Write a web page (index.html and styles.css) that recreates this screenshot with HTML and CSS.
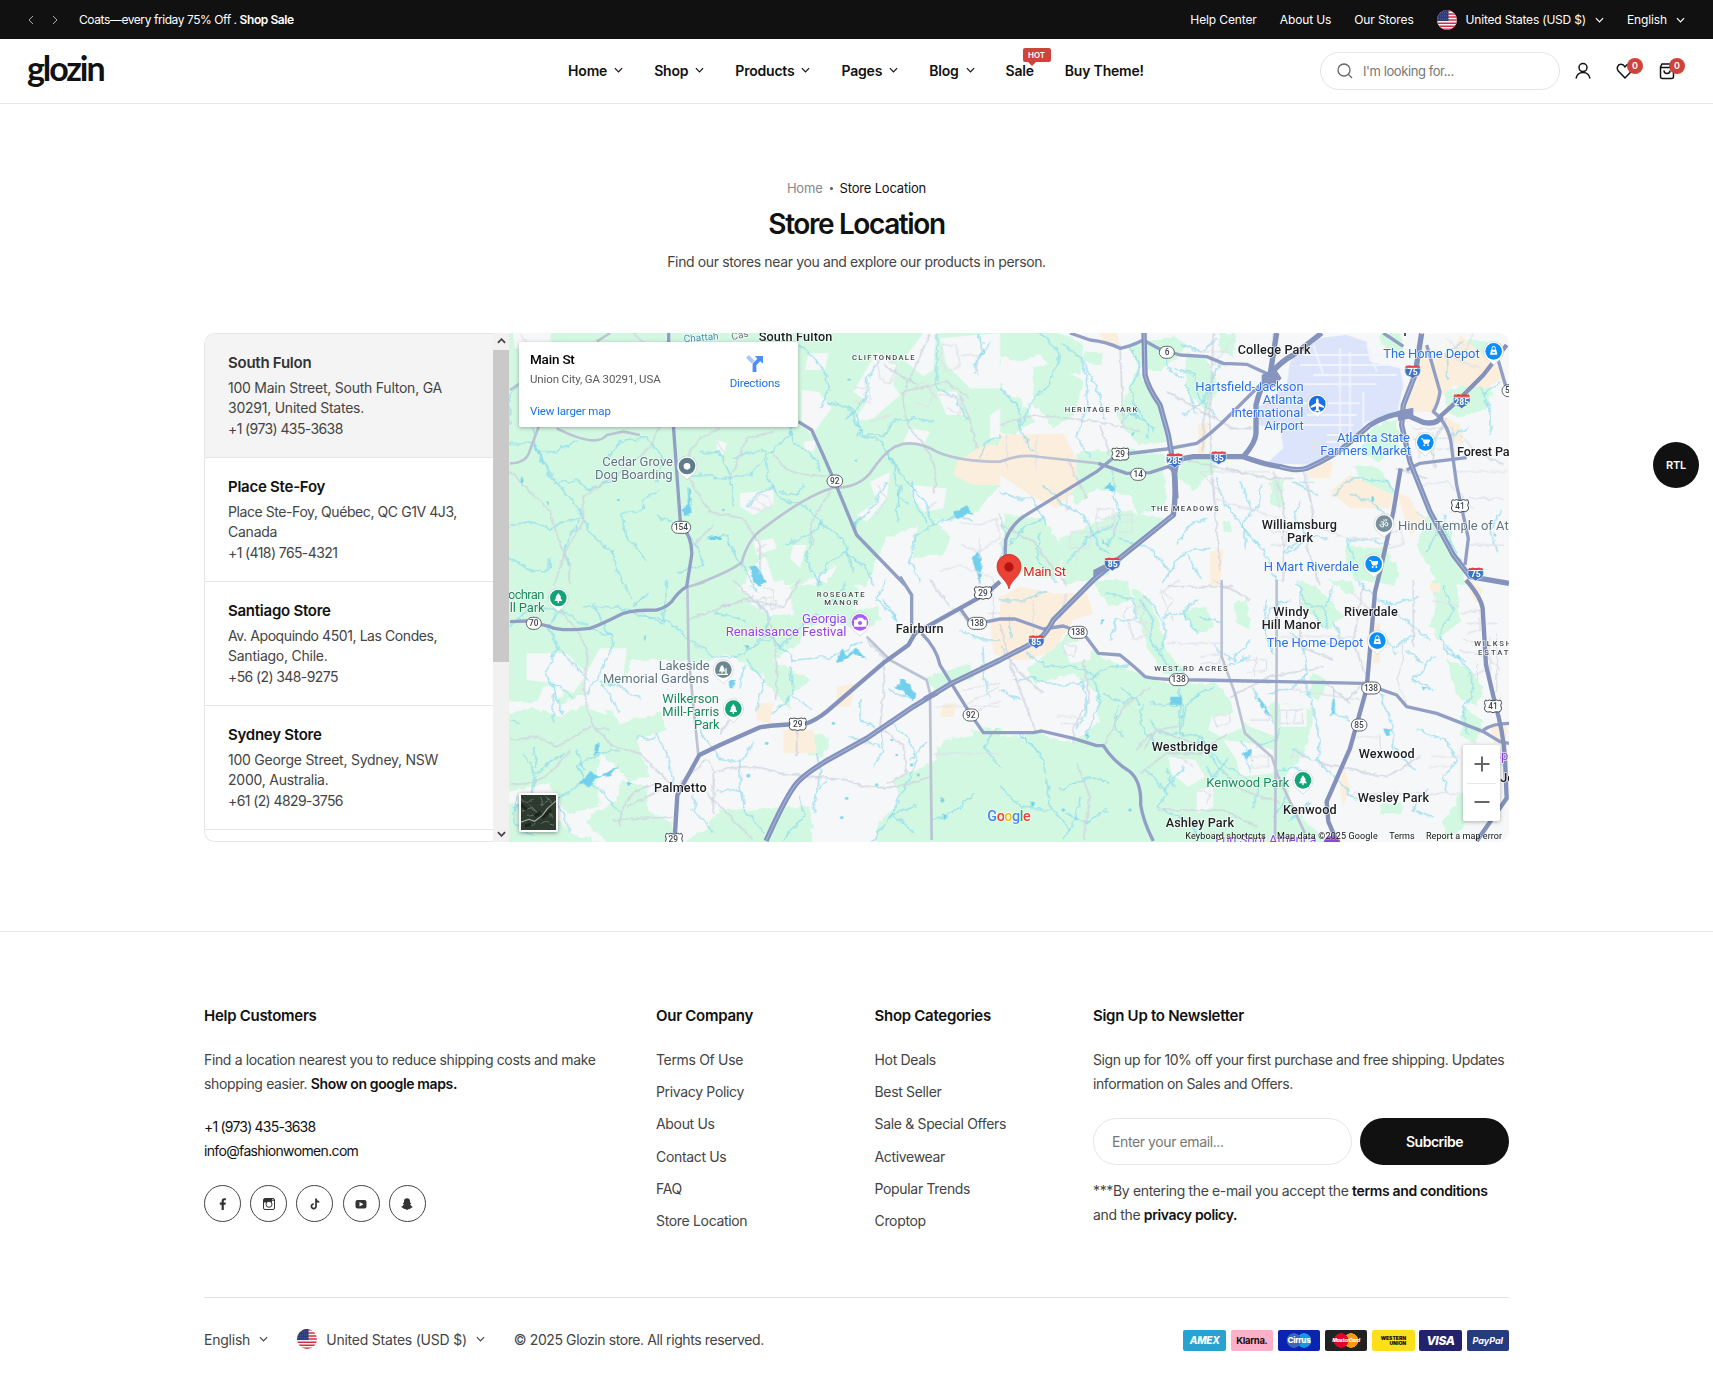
FILE: index.html
```html
<!DOCTYPE html>
<html lang="en">
<head>
<meta charset="utf-8">
<title>Store Location – Glozin</title>
<link rel="stylesheet" href="styles.css">
</head>
<body>
<svg class="sprite" width="0" height="0" aria-hidden="true">
  <defs>
    <clipPath id="round"><circle cx="10" cy="10" r="10"/></clipPath>
    <filter id="meander" filterUnits="userSpaceOnUse" x="0" y="0" width="3060" height="1580"><feTurbulence type="fractalNoise" baseFrequency=".05" numOctaves="2" seed="4"/><feDisplacementMap in="SourceGraphic" scale="13" xChannelSelector="R" yChannelSelector="G"/></filter>
    <filter id="coast" filterUnits="userSpaceOnUse" x="-60" y="-60" width="3180" height="1700"><feTurbulence type="fractalNoise" baseFrequency=".04" numOctaves="3" seed="9"/><feDisplacementMap in="SourceGraphic" scale="22" xChannelSelector="R" yChannelSelector="G"/></filter>
    <symbol id="flag" viewBox="0 0 20 20"><g clip-path="url(#round)"><rect width="20" height="20" fill="#f4f4f6"/><path d="M0 .8h20M0 3.9h20M0 7h20M0 10.1h20M0 13.2h20M0 16.3h20M0 19.3h20" stroke="#d22f45" stroke-width="1.5"/><rect width="11.5" height="11" fill="#2b3a78"/><path d="M1 3h10M1 6h10M1 9h10" stroke="#7f8bbb" stroke-width=".7" stroke-dasharray=".8 1.2"/></g></symbol>
    <symbol id="down" viewBox="0 0 10 6"><path d="M1 1l4 4 4-4" fill="none" stroke="currentColor" stroke-width="1.3"/></symbol>
    <symbol id="pin" viewBox="-32 -34 64 76"><path d="M0 40C-4 30-30 24-30-2A30 30 0 0 1 30-2C30 24 4 30 0 40Z" fill="#fff" stroke="#b9c0c6" stroke-width="1.5"/><circle cy="-2" r="25" fill="currentColor"/></symbol>
    <symbol id="us" viewBox="-27 -22 54 44"><path d="M-22-18q5 4 11 0q11 5 22 0q6 4 11 0l4 7q-6 11 0 18q-1 9-9 11q-12-2-17 2q-5-4-17-2q-8-2-9-11q6-7 0-18Z" fill="#fff" stroke="#444b52" stroke-width="3"/></symbol>
    <symbol id="is" viewBox="-28 -26 56 50"><path d="M-21-20q4 3 10-1q11 4 22 0q6 4 10 1l4 8h-50Z" fill="#e04444"/><path d="M-25-11h50q3 14-6 24q-12 2-19 10q-7-8-19-10q-9-10-6-24Z" fill="#3f73c4" stroke="#fff" stroke-width="2"/></symbol>
    <symbol id="tree" viewBox="-12 -16 24 32"><path d="M0-15l9 13H6l6 11H2v6h-4v-6h-10l6-11h-3Z" fill="#fff"/></symbol>
    <symbol id="cart" viewBox="-14 -14 28 28"><path d="M-13-11h5l5 14h12l4-10h-17" fill="#fff" stroke="#fff" stroke-width="3"/><circle cx="-3" cy="9" r="3" fill="#fff"/><circle cx="8" cy="9" r="3" fill="#fff"/></symbol>
    <symbol id="bagm" viewBox="-14 -16 28 32"><path d="M-8-3h16l3 15h-22Z" fill="#fff"/><path d="M-5-2v-5q0-6 5-6t5 6v5M-4 4h8" fill="none" stroke="#fff" stroke-width="3"/><path d="M-4 5h8" stroke="#0b8dfa" stroke-width="3"/></symbol>
  </defs>
</svg>

<div class="topbar">
  <div class="announce">
    <svg class="arrow" viewBox="0 0 6 10"><path d="M5 1L1 5l4 4"/></svg>
    <svg class="arrow" viewBox="0 0 6 10"><path d="M1 1l4 4-4 4"/></svg>
    <p>Coats—every friday 75% Off . <b>Shop Sale</b></p>
  </div>
  <div class="toplinks">
    <a>Help Center</a><a>About Us</a><a>Our Stores</a>
    <a class="picker currency"><svg class="flag"><use href="#flag"/></svg>United States (USD $)<svg class="chev"><use href="#down"/></svg></a>
    <a class="picker">English<svg class="chev"><use href="#down"/></svg></a>
  </div>
</div>

<header class="header">
  <a class="logo">glozin</a>
  <nav class="nav">
    <a>Home<svg class="chev"><use href="#down"/></svg></a>
    <a>Shop<svg class="chev"><use href="#down"/></svg></a>
    <a>Products<svg class="chev"><use href="#down"/></svg></a>
    <a>Pages<svg class="chev"><use href="#down"/></svg></a>
    <a>Blog<svg class="chev"><use href="#down"/></svg></a>
    <a class="sale">Sale<span class="hot">HOT</span></a>
    <a>Buy Theme!</a>
  </nav>
  <div class="tools">
    <div class="search"><svg viewBox="0 0 16 16"><circle cx="7" cy="7" r="6"/><path d="M11.5 11.5L15 15"/></svg>I'm looking for...</div>
    <a class="tool"><svg viewBox="0 0 18 18"><circle cx="9" cy="5.6" r="4"/><path d="M2 16.5c.8-4 3.600-6 7-6s6.200 2 7 6"/></svg></a>
    <a class="tool"><svg viewBox="0 0 18 18"><path d="M9 16L2.300 9C.3 6.500 1.500 2.500 4.800 2.300 6.800 2.200 8 3.200 9 4.800c1-1.600 2.200-2.600 4.200-2.500 3.300.2 4.500 4.200 2.500 6.700Z"/></svg><i>0</i></a>
    <a class="tool"><svg viewBox="0 0 18 18"><path d="M4 2h10l1.500 3v9.500q0 2-2 2h-9q-2 0-2-2V5ZM2.500 5.500h13M6 8.500c0 4 6 4 6 0"/></svg><i>0</i></a>
  </div>
</header>

<main>
  <div class="intro">
    <div class="crumbs"><span>Home</span><em></em>Store Location</div>
    <h1>Store Location</h1>
    <p>Find our stores near you and explore our products in person.</p>
  </div>

  <section class="locator">
    <div class="stores">
      <article class="active"><h2>South Fulon</h2><p>100 Main Street, South Fulton, GA</p><p>30291, United States.</p><p class="tel">+1 (973) 435-3638</p></article>
      <article><h2>Place Ste-Foy</h2><p class="tight">Place Ste-Foy, Québec, QC G1V 4J3,</p><p>Canada</p><p class="tel">+1 (418) 765-4321</p></article>
      <article><h2>Santiago Store</h2><p class="tight">Av. Apoquindo 4501, Las Condes,</p><p>Santiago, Chile.</p><p class="tel">+56 (2) 348-9275</p></article>
      <article><h2>Sydney Store</h2><p>100 George Street, Sydney, NSW</p><p>2000, Australia.</p><p class="tel">+61 (2) 4829-3756</p></article>
    </div>
    <div class="scroll">
      <svg viewBox="0 0 10 6"><path d="M1 5l4-4 4 4"/></svg>
      <span></span>
      <svg viewBox="0 0 10 6"><path d="M1 1l4 4 4-4"/></svg>
    </div>
    <div class="map">
      <svg class="canvas" viewBox="27 24 3000 1527">
        <rect x="27" y="24" width="3000" height="1527" fill="#f6f7f8"/>

        <!-- woodland -->
        <g fill="#d3f8e2" filter="url(#coast)">
          <path d="M0 0H1500V480L1430 560 1310 590 1350 640 1330 690 1240 700 1250 600 1160 640 1130 700 1100 780 980 780 1010 720 900 780H0Z"/>
          <g transform="translate(1500 0)">
            <path d="M0 0H60L200 30 250 60 240 150 170 130 120 90 60 110 0 90ZM0 200l60 20 40 70-60 40-40-10ZM250 80l60 10-10 30-50-10ZM390 60l130-30 40 30-30 40-60 40-60-20ZM410 130l60 90 30 130-90 10-60-90ZM660 24h50l-10 70-40-10ZM560 80l60 20 40 90-40 70-60-60ZM100 130l60-20 90 60-30 100-60 40-60-70ZM240 380l150-10 100 20 10 150-80 30-30-60-100-20-60 50-40-60ZM20 570l110 10 60 90-20 90-140-20-30-80ZM180 640l180-80 130 20-110 110-60 60-130 30ZM560 390l90 10-10 40-60 60-50-50ZM1130 300l60-20 10 90-70 40-60-30ZM1340 200l60-30 80 20-20 60-80 30-40-20ZM1060 420l80 10 50 90-60-10-50-50ZM810 470l40-10v80h-40ZM670 590h22v30h-22ZM1040 660l110 10 50 70-20 40-120-20-20-60ZM1290 560l60 50 20 90 30 80-90-10-60-110ZM1140 24l60 0 10 60-60-10ZM1400 40l110 20-20 60-70-10Z"/>
          </g>
          <g transform="translate(0 765)">
            <path d="M0 0H700L720 30 770 70 850 120 900 110 1130 80 1150 120 1090 150 920 110 900 190 820 240 930 300 870 350 870 390 780 290 730 250 680 220 600 250 480 240 400 240 370 300 180 370 150 340 100 370 0 360ZM0 420L90 380 180 410 260 370 340 400 360 430 480 400 500 450 410 480 420 520 450 590 380 600 360 570 300 520 290 600 300 680 200 700 150 610 0 640ZM0 660l157 40 60 60 130 43H0ZM360 600l80 20 0 70 80 40 0 73H340l-90-80 100-60ZM660 690l270-10 10 90-10 33H530l90-60ZM740 0h60l-50 30ZM780 120l90-20 30 70-80 50-50-40ZM870 20l170-20 50 40-60 90-150 10ZM1280 290l130-40 10 40-120 40ZM1310 500l50-30 140 0v333H1120l20-80 60-60-20-60 60-30 70-30ZM1410 450l90-10v60h-70ZM920 460l70 10-20 60-50-10Z"/>
          </g>
          <g transform="translate(1500 765)">
            <path d="M0 470l120-10 100 30 80-60-10-90-70-60-110 30-30-40 60-50 60-60 50 30 70 50 120 50 60 20H650l40 50 60 30 80-20 110 20-20 120-60 70 10 90 50 60 100 80 60 60 60 143H0ZM170 200l60 0 60 30-60 50-80-20ZM390 24l50 20 40 90 20 80 60 60-70 10-50-80ZM270 0h110l10 60-60 20ZM540 90l80-10 20 60-50 20ZM890 0l60 20 80 90-50 40-70-70ZM980 0h80v50ZM940 280l50 20-30 60-40-10ZM1290 0l80 0 10 120-60 60-30-40 20-60ZM1340 240l60 20 50 60-20 60-60-30ZM1390 380l60 40-20 70-50-20ZM1380 640l50 0-30 90-60 50-10-50ZM1140 670l70 0-10 30-60 0ZM700 70l40-10 10 90-40-20Z"/>
          </g>
        </g>

        <!-- clearings inside the woodland -->
        <g fill="#f6f7f8">
          <path d="M40 24h110l5 40-30 20-80-14ZM905 195l50 5 40 50-60 80-30-30ZM912 350l38-5-10 35-28-5ZM720 505l100-10 0 45-60 30-40-25ZM1230 480l110 10-10 60-60 10-30-40ZM1270 24h40l-10 110-30 20-60-50ZM1060 200l70-120 60 40-10 60 20 30-80 70-60 10 40-60ZM1320 40l180-16V190l-90 0-70-70ZM1310 200l60 0 20 70-50 0ZM1110 470l60-30-10 80-60 70-30-20 60-40ZM745 740l50-50 30 90h-90ZM760 650l60-10 10 30-60 20ZM880 660l40 0-20 70-30-30ZM650 345l30 10-10 35-20-10ZM1230 310l60 10-20 40-60-10ZM1470 270l30-20v90h-30ZM925 85l60 0-10 50-60 0Z"/>
          <g transform="translate(0 765)"><path d="M80 220h120l60 60-40 60-60-30-80-10ZM300 205l80 0-10 80-70 30 20 90-60-20-10-90ZM750 290l40-10 10 50-30 20ZM760 20l90-20 20 80-60 30-60-40ZM130 320l60-10 0 40-80 20Z"/></g>
          <g transform="translate(1500 765)"><path d="M635 410l80-15 20 45-70 30-40-20ZM505 530l80 10 30 50-50 30-50-40ZM670 480l80 10 70 20 0 70-100 10-10-50ZM590 630l50-10 0 60-50 20ZM690 350l60-20 60 60 20 80-80-30-50-40ZM250 320l30 20 0 60-20-10ZM190 190l90-10-10 60-60 10ZM840 370l80 10 0 60-80 0Z"/></g>
        </g>

        <!-- commercial zones -->
        <g fill="#fbeedd">
          <path d="M1370 410l80-50 50 0v120l-80 0-60-30Z"/>
          <g transform="translate(1500 0)"><path d="M0 330l190-5 40 80 0 80-60 65-80-40-90-60ZM300 24h50l10 50-50-20ZM595 300l30-10-10 90-20 20ZM1215 180h85l10 80-90 0ZM1260 60l90 30 30-60 140 120-60 40-100-10-60 60-60-80ZM1320 270l60 30 10 60-50-20ZM990 500l60-50 130 60-10 40-120 0ZM1190 500l40 20 40 80-40 30ZM630 680l40-10-10 110h-30ZM920 410l80 0-10 50-60 0Z"/></g>
          <g transform="translate(0 765)"><path d="M850 450l90 0 10 70-100 0ZM1010 320l60-10-20 70-40 0ZM1470 120h30v110l-20-10ZM770 370l50 0-10 60-40-10ZM1330 370l40 0-10 40h-40Z"/></g>
          <g transform="translate(1500 765)"><path d="M0 50l60-30 100 20 100 0 20 60-60 20-60 90-70 30-90 0ZM1120 130l20 0 0 120-20 0ZM1290 10l30 0 0 30-30-10ZM1410 0l40 30-20 40-20-30ZM1470 430l50 0 0 70-40-10ZM1030 560l20 60-20 60-10-50Z"/></g>
        </g>
        <path d="M2370 110l80-70 90-10 60 20 10 60 90 20 10 50-20 90-90 20-80 90-70 40-150-5 50-45-10-60-70-10 0-50 90-70Z" fill="#dce4fb"/>
        <g fill="none" stroke="#f1f4fe" stroke-width="6"><path d="M2410 90h240M2400 120h270M2440 150h250M2410 178h220M2400 235h180M2420 270h150M2400 300h160M2520 70v310M2550 80v250M2480 330h90M2480 350h80M2590 200v100M2440 60l30 90M2600 60l30 80"/></g>

        <!-- creeks and ponds -->
        <g fill="none" stroke="#86d8ee" stroke-width="3.2" stroke-linejoin="round" stroke-linecap="round" filter="url(#coast)">
          <path d="M45 180Q20 230 27 300M100 310l10 70 60 0 60-35M30 355l70 0 30 60 30 60 70-10 30 30 80-30M105 360l60 110 70 80 40 80 60 50 20 70 40 70M30 600l60-10 60 20 40-20 50-10M30 700l70 40 50-10 0-30M240 580l-50 100 20 40M320 400l40-50 80-10 50 60-20 70M360 565l70-10 0-30 50-30M360 565l20 70 60 70M470 570l60 30 60 60 20 60-80 20M545 560l30-20-10-50M570 450l50 0 60 10 70-10 40-50 80-70 10-50M600 380l60 0 30 70 10 90M700 400l40-20 60 0M800 400l0 60 40 60 70 20 60 60 60 40 30 100M840 500l50 10 20-30M740 545l20-30 60-30M870 300l10 50 60 40 20 50M900 60l70 70 20 60-30 60M985 230l60 20 40 80 60 20 40 80 10 80 30 30M1040 280l60-60 0-60 40-60M1045 240l30 40 0 50M1090 330l60 0 30-40 60-10 60 10M1150 360l60 100 60 60 30 80-50 30-20 80 30 60M1200 480l-10 110M1240 470l0 60 40 60M1300 600l70-30 50 20M1440 400l20-50 40-20M1310 24l0 160 60 40 30 60M1420 130l50-80M850 660l80-30 40-40M930 640l-10 70 40 70M950 780l30-60 60-40 60 50 20 50M620 640l60-10 30 70 40 60 20 40M130 180l20 60-20 40M1060 600l60-60 40-70M1440 24l10 60-30 60"/>
          <g transform="translate(1500 0)"><path d="M0 190l60 60 0 70 40 60M120 24l60 60-30 90-60 60-30 80M190 60l50 40 20 60 0 80-30 100 40 60M245 100l50 100 20 80M390 60l30 70-30 60 20 70-30 20M380 260l60 30 0 50M410 250l50 70M490 80l20 60 40 20M520 130l70 20 0 60 60 70M560 180l30 90M540 60l60 20 50-40M660 110l-50 120-60 40M0 500l40 20 60 0 40 80M30 660l50-60 50-20M130 480l60 60 60 30 50 100 30 20M340 440l0 60 20 80-40 80M200 720l60-80 80-40M0 700l20-60-20-70M490 770l60-90 80-10M530 660l40-60 50-20M560 690l40 70M650 460l20 70 60 80 60 60 40 100M720 470l40 90M780 480l0 60-50 50 10 80M900 530l-20 60 50 50-70 50M940 470l-60 0 70 40M850 690l60-60 70 10M1000 510l60-50 100 10 30 40M1050 510l70 20 60 70M1060 700l-20-50 60-10 70 20M1390 50l-50 30 0 80M1440 190l30 60 0 80M1450 210l50-40M1330 570l20 80 30 60M1280 680l30-60M1500 560l-30 60 20 60M1350 330l50-20M120 620l-10 80 60 70M350 640l100 30 60 70"/></g>
          <g transform="translate(0 765)"><path d="M175 90l-30 50 30 60-40 80 30 60 20 60M30 140l60-60 80 10M180 90l100 60 60 20M170 200l60 60 30 40M280 70l30 60 30 60-40 90-40 60M300 300l60 20 60 40M300 300l60 100M250 80l100 0 80 30 70 10M400 80l40-40M500 120l70 60 70 50 80 0 60-50 30 0M740 240l50 60-20 90M770 60l40 50-20 60M730 260l-10 60M800 160l80 80 120-10 80-40M870 260l10 80-60 60M880 350l60 40M1160 0l-30 60 60 60M1150 60l40 60M1000 60l40-50M830 200l60-40 60-60M160 310l0 120M160 310l60 40M410 470l50 10 10-20 30 60 20 90M260 600l-30-40 70-40 60-10M260 600l40 30 60 70M260 600l-90 60 40 90M250 570l-20-60M70 520l40 60 80-60M100 570l0 60-60 60M110 560l-10-60M50 650l-10 80 60 40M600 450l60 90 60 0M720 540l0 80 10 60 60 80M720 630l-70 0M720 550l40-60M950 520l10 60-20 120M980 600l-30 40M1080 360l0 60 60 30 10 60-30 50M1170 330l50 20-10-40M1140 500l-90-30M1230 540l50-50M1180 700l-60 80M1180 700l70-20M1180 700l60 60M1160 420l60 50 30 60-20 60-60 120M1300 720l60-20 60-60M1450 200l0 90 20 60M1490 440l-40 60 50 60M900 650l10 60-60 70M580 640l0 50 60 70M650 100l80 20M500 0l-10 130-60-20M30 420l30 10M1380 150l60 30 60 0"/></g>
          <g transform="translate(1500 765)"><path d="M0 60l80 0 60-30M80 220l60 40 90 0 60 30M0 330l60 30M30 170l0-60M40 300l60-10 80 30 90-20 60-40 60 0M250 310l10 80-30 60M280 300l20 60-20 60-20 40M310 340l60 30 30-20M330 180l20-60 60 0-10-60-80-20M420 60l40 60-10 60 60 80 50 20M430 40l40 50 30 60-20 60M550 100l40 60M590 60l-50 40-50 10M600 110l60 20M800 60l-10 90 30 70M870 60l-60 20-10 60M640 200l60 40 50-60M670 260l80-30M430 370l-10 60 60 80M420 370l-60-50M450 370l100 10 0 60M540 330l0 130-60 0-30-40M540 420l40-70 60-30M540 460l60 10 60 100 60 40M760 330l40 60 20 40M810 340l70-20 40-40-10-90-40-30M910 290l30 100 20 90-10 60 60 60 60 60M840 440l-10 40-60 20M740 510l-20-30M740 520l10 60M940 540l-60-30M830 570l60-10 40 40M590 470l90 90 100 60-20 60M680 540l-60 80M440 570l60 70-30 40 90 40 50 60M550 560l-60 80M500 570l20 50M140 580l-20-60-60-60M140 600l10 80 60 70M240 650l-10 60-40 70M0 620l60 60 90 10M200 700l60 30 60-40M980 80l20-60M940 90l30 60M1000 130l30 60-60 0M1140 340l40 100 0 60 60 70M1250 450l90 30 30 60-30 40M1300 330l-60-30 60-70M1180 200l60-30M1160 80l80 60 50 40M1140 160l50 60M1330 20l30 70-40 70 20 60 60 20M1340 200l60 60 20 60-30 80 10 60M1050 420l-50-20 0-70M1270 250l-50-40M1280 630l-40 60 60 20M1340 640l-10-60M890 10l30 60 60 20 0 60M1070 0l60 60 60 10 70-20M1500 550l20 0M180 630l90-40 60 20M360 380l-20 50 30 40M870 720l60-50M640 600l-20-40M860 650l-40 60"/></g>
        </g>
        <g fill="#73d0ec" filter="url(#meander)">
          <path d="M545 555l25-25 5 30-20 15ZM625 635l40 0 0 10-40 0ZM750 725l20-5 30 50-20 15-20-15ZM1360 560l40-20 20 30-20-5-30 20ZM60 465l6-8 5 12-6 6ZM140 525l6 0 0 15-6-8ZM1060 405l12-6-4 14ZM1415 700l20-20 10 20-5 80ZM640 375l14 2-6 8ZM565 490l5 0 0 60-6 0ZM1040 165l10-5 5 8ZM1065 590l6 0 0 20-6 0Z"/>
          <path d="M1832 470l10 30-30-10ZM1800 640l30 25-20-10ZM1905 320l-8 14-5-8ZM2610 520l14-6-4 14ZM2980 620l6 10-8 4Z"/>
          <path d="M1010 1010l20-40 10 20 30-20 30 35-20-10-20-10-30 25ZM1200 1060l30 20 20 40-15 5-30-30-25-10 20-5ZM250 1360l20-20 30 15 50-30 10-10-30 35-40 10-20 25-30-10ZM285 1260l14-8-4 30-12 8ZM690 1065l14 0-6 25-8 0ZM380 1370l16 4-12 10ZM1320 1415l14 10-6 10ZM1330 1465l10 5-8 14ZM430 930l8 4-4 16ZM735 960l12 4-8 12Z"/>
          <path d="M2010 1115h36v24h-36ZM2275 1115l25 40 15 20-15-10-30-40ZM2500 1120l8 10-4 30-14 15ZM2650 1210l24 4-4 14-14 4ZM2765 1085l16 2-10 10ZM1755 1232l12-4-6 14ZM1585 1425l20 8-6 16ZM2228 1285l24-10 4 20-20 6ZM1800 885l12-4-8 20Z"/>
        </g>
        <g fill="#82d7ee"><circle cx="1175" cy="1245" r="4"/><circle cx="1190" cy="1290" r="4"/><circle cx="1235" cy="1320" r="5"/><circle cx="1255" cy="1350" r="5"/><circle cx="1040" cy="1420" r="5"/><circle cx="1025" cy="1478" r="5"/><circle cx="745" cy="1352" r="6"/><circle cx="1130" cy="1380" r="5"/><circle cx="1000" cy="1195" r="5"/><circle cx="800" cy="1255" r="5"/><circle cx="670" cy="555" r="4"/><circle cx="355" cy="525" r="4"/><circle cx="1690" cy="1455" r="5"/><circle cx="1890" cy="1455" r="5"/></g>

        <!-- residential streets -->
        <g fill="none" stroke="#dde1e8" stroke-width="3.5" filter="url(#meander)">
          <path d="M745 545l30-35 30 0 10 30-30 20-30-15M770 520l30 30M650 350l20 30M1140 90l50 30-20 60-30-20-10-60M1060 190l50 0 0 40-50 0M1170 270l-60 20M1240 190l30-20 30 40-20 40-30-20M1330 60l40 0 10 60-40 20-20-40ZM1380 90l50 0 0 60M1320 210l60 10 0 50-40-20M1280 180l30 40M1130 480l30 40-30 50M1310 530l-30 20M1380 590l60 10 50-20 10 60-60 40-60-20M1440 640l0 60M800 655l-30 20 30 20M60 24l40 60 50-20M1320 740l60-20 100 40"/>
          <g transform="translate(1500 0)"><path d="M290 550h50v60h-50ZM290 580h60M345 570h50v50h-50ZM360 590h50M210 620h60v50h-60ZM230 660v50M810 620h50l0 40h-50M1160 630l40-20 10 50-50 10M1240 340h120M1250 370h100M1260 400l0-80M1300 320v110M1240 310h120v100M1340 40l60 60M1360 100l80 30M1420 24l-30 70M1380 330l60 60M200 560v-60M600 440h210M600 440l60 60M920 440l20 160 100 40M1040 640h100M1360 440h160M1250 560l60 60M1350 560l60-40 100 0M840 550l-20-90M640 520l200 60M20 330l0 100M110 330v100M600 80h90M620 120h80M700 40l-60 80M1260 480l80-10 80 80M1400 660h110"/></g>
          <g transform="translate(0 765)"><path d="M775 60l20-10 5 25-20 10ZM810 70l18-10 0 25-15 0ZM790 20l30 10 0 25-30 0M1480 0v120M645 580l-20-40M1460 100h40M1360 80l60 60M1300 380h200M1400 370l100-50M1420 400l80-40M1390 330l110-20M1300 520h200"/></g>
          <g transform="translate(1500 765)"><path d="M380 80l60 0-20 40 30 40-50 20-10-40-20-30ZM430 50l-30 70 50 10M540 0l-60 40 40 80M480 30l40 30-30 50M100 60v100M200 40l-20 80M190 190l40 10-10 30-30-10ZM600 250h60v-30l-60 10M740 240l60 0 0 30-60 10M770 230l-10 60M840 390h70v40h-70ZM860 390v40M885 390v40M640 410l50-10 0 30-40 10ZM755 530h50v30h-50ZM870 530l20-20 30 20ZM170 410l60 0 10 20-60 0M520 520l60 40M590 630l40 10-10 30M750 420l60 0-10-20M1380 100l60-10 0 60-40 10M1400 130l90 0M1470 170v150M1490 160v180M1380 210l80 20 40 40M1400 290l60-20M1430 250l0 60M1390 180l50 10M500 190h170M840 170h230M1050 30l60 60M1210 180l0 60-20 60 30 70M1300 60l80 20M1290 530h90M1060 640h320M880 330l200 30M1140 520v-50h-90M1350 560h-60"/></g>
        </g>

        <!-- minor roads -->
        <g fill="none" stroke="#cdd3de" stroke-width="4" filter="url(#meander)">
          <path d="M30 440l120 120 30 100 30 60 0 60M250 510l0 80-50 80-40 110M250 515l120-80 80-70 30-60M660 310l-60 30-60 80M560 450l70 110 100 20 50 80 0 90M690 460l50-120 80-20M820 380q30 70 110 70h60M1290 24l-80 180q0 100 40 130 80 90 50 170M1250 180l-100-60M1410 290l20 80M1410 290l-30-80M990 500l-60 100 10 60M1210 200l130-30 70 50M400 24l40 40M640 600l-60 60"/>
          <g transform="translate(1500 0)"><path d="M0 300l100-30 200 20 120 30M640 24l-10 250 0 110 30 350M500 200l200 110 60 0M820 24l0 100M640 150l-30 130 0 100M360 60l10 250M910 440l30 120-20 110 40 110M820 440l30 80 0 250M300 300l30 90M540 400l260 60 80 0M0 600l100 50 100 130M200 400l60 120M1190 430l90 30M1340 280l-50 90 20 60M1510 420l-80-40"/></g>
          <g transform="translate(0 765)"><path d="M180 90l50 60q40 60 30 110-20 80 20 180l60 60 80 20 60 60 60 60M30 480l80-10 60 30 100-60 60 10M30 610q100 20 180-100M640 580v120M640 580q100-40 200 0l200 20q90 40 190 10l60-20M620 540l-80 70M700 0l100 100q30 80 30 160v100M720 380l-60 80M620 640l140 140M360 740q0-110 110-130M1100 180l50 50 0 110-10 100 70 60 10 80-60 30M380 680l120-60M900 0l-50 80-120-20-70 20M340 720l180-10M890 450l0 80M560 120l200-70M1290 0l60 80"/></g>
          <g transform="translate(1500 765)"><path d="M0 130l30 120 60 160 20 50M0 200l60 80 70 60M220 490l0-50 50-80-20-120M310 500l60-120 80-60M640 0q60 30 110 60M430 510l40-60 170 60M540 440q-90 0-130 70M680 460l-80 60-100 0-80 60M700 620l140 50M470 690h200l100 50M960 550l200 40 100-60M1090 20l-30 160 40 120-60 60M690 350l120-60 160-30M900 40v160l100 40M1240 0v200M230 550l40 100-20 130M500 20h200M970 300l80 70"/></g>
        </g>

        <!-- secondary roads -->
        <g fill="none" stroke="#bcc3d4" stroke-width="8" stroke-linejoin="round">
          <path d="M30 195l30-20M170 310q120 60 150 20l50-10 50 10M30 415q50 0 60-40l30-80M290 50l40-26M562 780L566 1000 595 1290M565 785l50-15"/>
          <path d="M590 778Q700 735 725 712Q745 640 790 610Q920 510 1000 488Q1070 490 1110 445Q1150 385 1185 365Q1240 340 1310 380Q1380 410 1500 410Q1560 385 1620 396L1795 415"/>
          <path d="M1100 935l70 70 110 60 10 40 5 440M2165 765l0 230 40 110 30 120 80 70 20 60 80 170M2330 765l0 240-5 543"/>
        </g>

        <!-- main roads -->
        <g fill="none" stroke="#929fc4" stroke-width="10" stroke-linejoin="round">
          <path d="M506 24v40M520 300L541 590Q578 640 575 690L560 785Q535 800 515 830Q495 850 470 855Q400 855 370 865Q290 905 270 910Q180 920 150 905L80 888L30 890M895 290L935 315Q970 390 1000 460L1070 630L1215 780M1235 900V810L1200 755"/>
          <path d="M1265 925Q1310 970 1320 1020L1360 1085L1410 1165L1450 1223H1600L1625 1218L1720 1240L1790 1262L1810 1262Q1840 1310 1890 1340Q1925 1370 1922 1440Q1930 1490 1960 1548"/>
          <path d="M1380 850L1405 885L1450 892L1500 882L1545 882L1630 912L1690 903L1750 925L1795 985L1860 990Q1910 1030 1935 1055Q1970 1065 2100 1065L2590 1075L2690 1110L2720 1145L2810 1165L2950 1220L3000 1250L3027 1255M2950 1215Q2980 1195 3027 1195"/>
          <path d="M1710 24L1770 45Q1820 50 1860 70Q1890 65 1930 45L1975 70L2040 90L2120 95L2170 115L2240 118L2310 150"/>
          <path d="M1515 710L1517 645Q1530 605 1570 575L1790 440L1850 390L2000 372L2090 355Q2130 330 2190 270L2300 160"/>
          <path d="M1795 415L1880 445L1950 443L2005 425M2720 435L2760 415L2900 398M2780 60L2820 200Q2815 235 2800 260Q2850 300 2855 370L2870 480L2905 640L2895 720M2650 24l60 40M2990 90l35 120"/>
        </g>
        <g fill="none" stroke="#8391bb" stroke-width="13" stroke-linejoin="round">
          <path d="M525 1525L532 1410L598 1290L660 1260L780 1207Q830 1198 915 1197Q950 1185 980 1160L1155 1010L1225 960L1245 925L1460 805L1500 770"/>
          <path d="M2702 430L2680 560L2640 740L2625 800L2600 1090L2550 1270L2480 1430L2485 1490L2510 1548"/>
          <path d="M2898 765Q2942 815 2948 850L2958 1020L2985 1135Q3010 1220 3015 1300L3020 1420L2930 1548"/>
          <path d="M3020 60L2950 150L2870 230L2820 275"/>
        </g>
        <g fill="none" stroke="#8493bd" stroke-width="16" stroke-linejoin="round">
          <path d="M798 1548Q860 1410 890 1375Q910 1350 975 1310L1100 1240L1240 1145L1355 1075L1500 1005L1615 945Q1640 925 1660 885L1780 765L1840 715L2020 570Q2030 500 2022 430"/>
          <path d="M1932 24L1935 150Q1945 190 1980 240L2005 330L2022 430L2028 520M2005 430Q2030 400 2080 395H2230Q2300 420 2340 425Q2390 440 2420 430Q2500 395 2540 360L2610 300Q2680 260 2715 268L2770 292Q2810 300 2825 275"/>
          <path d="M2230 395Q2270 350 2268 320V240Q2280 190 2300 160Q2340 110 2380 90L2465 24M2310 150L2330 24M2765 24L2745 150L2710 240L2705 300L2730 410L2790 560L2860 690L2910 755L3027 775"/>
        </g>
        <g fill="none" stroke="#b4c0e2" stroke-width="2.500"><path d="M798 1548Q860 1410 890 1375Q910 1350 975 1310L1100 1240L1240 1145L1355 1075L1500 1005L1615 945Q1640 925 1660 885L1780 765L1840 715L2020 570M1932 24L1935 150Q1945 190 1980 240L2005 330L2022 430M2745 150L2710 240L2705 300L2730 410L2790 560L2860 690L2910 755M2340 425Q2390 440 2420 430Q2500 395 2540 360L2610 300"/></g>
        <path d="M2285 150l40-20 20 30-30 30-30 0ZM1780 735l40-20 0 20-40 22ZM2005 400l35 5-10 50-20-20ZM1270 1115l30-15 15 10-40 20ZM2690 258l50-10 0 30-45 10Z" fill="#8794bd"/>

        <!-- route shields -->
        <g class="route">
          <rect x="981" y="450" width="47" height="36" rx="18"/><text x="1004" y="476">92</text>
          <rect x="515" y="589" width="57" height="36" rx="18"/><text x="543" y="615">154</text>
          <rect x="1978" y="64" width="45" height="36" rx="18"/><text x="2001" y="90">6</text>
          <rect x="1892" y="430" width="45" height="36" rx="18"/><text x="1915" y="456">14</text>
          <rect x="79" y="877" width="45" height="36" rx="18"/><text x="101" y="903">70</text>
          <rect x="1403" y="877" width="57" height="36" rx="18"/><text x="1431" y="903">138</text>
          <rect x="1389" y="1152" width="47" height="36" rx="18"/><text x="1412" y="1178">92</text>
          <rect x="1705" y="904" width="57" height="36" rx="18"/><text x="1734" y="930">138</text>
          <rect x="2008" y="1046" width="57" height="36" rx="18"/><text x="2036" y="1072">138</text>
          <rect x="2585" y="1071" width="57" height="36" rx="18"/><text x="2613" y="1097">138</text>
          <rect x="2554" y="1182" width="47" height="36" rx="18"/><text x="2577" y="1208">85</text>
          <rect x="3006" y="179" width="47" height="36" rx="18"/><text x="3022" y="205">5</text>
          <use href="#us" x="1834" y="365" width="54" height="44"/><text x="1861" y="396">29</text>
          <use href="#us" x="2853" y="520" width="54" height="44"/><text x="2880" y="551">41</text>
          <use href="#us" x="1422" y="781" width="54" height="44"/><text x="1449" y="812">29</text>
          <use href="#us" x="866" y="1175" width="54" height="44"/><text x="893" y="1206">29</text>
          <use href="#us" x="495" y="1521" width="54" height="44"/><text x="520" y="1552">29</text>
          <use href="#us" x="2952" y="1121" width="54" height="44"/><text x="2979" y="1152">41</text>
        </g>
        <g class="inter">
          <use href="#is" x="1995" y="380" width="58" height="50"/><text x="2024" y="416">285</text>
          <use href="#is" x="2130" y="373" width="52" height="48"/><text x="2156" y="408">85</text>
          <use href="#is" x="2712" y="115" width="52" height="48"/><text x="2738" y="150">75</text>
          <use href="#is" x="2856" y="202" width="58" height="50"/><text x="2885" y="239">285</text>
          <use href="#is" x="1811" y="692" width="52" height="48"/><text x="1838" y="727">85</text>
          <use href="#is" x="2901" y="722" width="52" height="48"/><text x="2927" y="757">75</text>
          <use href="#is" x="1583" y="925" width="52" height="48"/><text x="1609" y="960">85</text>
        </g>

        <!-- place names -->
        <g class="town">
          <text x="776" y="48" textLength="221">South Fulton</text><text x="2213" y="88" textLength="219">College Park</text>
          <text x="2871" y="393" textLength="190">Forest Park</text>
          <text x="2285" y="612" textLength="226">Williamsburg</text><text x="2361" y="651" textLength="78">Park</text>
          <text x="1187" y="925" textLength="144">Fairburn</text><text x="462" y="1402" textLength="158">Palmetto</text>
          <text x="2320" y="872" textLength="107">Windy</text><text x="2285" y="911" textLength="178">Hill Manor</text>
          <text x="2532" y="872" textLength="161">Riverdale</text><text x="1955" y="1278" textLength="198">Westbridge</text>
          <text x="2576" y="1300" textLength="168">Wexwood</text><text x="2573" y="1431" textLength="214">Wesley Park</text>
          <text x="2349" y="1467" textLength="161">Kenwood</text><text x="1997" y="1505" textLength="205">Ashley Park</text>
          <text x="2830" y="24" text-anchor="end" textLength="170">Hapeville</text><text x="3001" y="1370">Jonesboro</text>
        </g>
        <g class="area">
          <text x="1056" y="104" textLength="188">CLIFTONDALE</text><text x="1694" y="260" textLength="218">HERITAGE PARK</text>
          <text x="1953" y="559" textLength="203">THE MEADOWS</text><text x="950" y="815" textLength="144">ROSEGATE</text><text x="973" y="840" textLength="101">MANOR</text>
          <text x="1963" y="1037" textLength="220">WEST RD ACRES</text><text x="2923" y="964" textLength="160">WILKSHIRE</text><text x="2934" y="989" textLength="130">ESTATES</text>
        </g>
        <g class="poi">
          <g class="grey"><text x="307" y="423" textLength="212">Cedar Grove</text><text x="285" y="463" textLength="233">Dog Boarding</text><text x="2694" y="614" textLength="418">Hindu Temple of Atlanta</text><text x="476" y="1034" textLength="153">Lakeside</text><text x="309" y="1073" textLength="319">Memorial Gardens</text></g>
          <g class="blue"><text x="2650" y="98" textLength="289">The Home Depot</text><text x="2086" y="198" textLength="325">Hartsfield-Jackson</text><text x="2288" y="238" textLength="123">Atlanta</text><text x="2194" y="277" textLength="216">International</text><text x="2293" y="316" textLength="118">Airport</text><text x="2511" y="352" textLength="219">Atlanta State</text><text x="2461" y="391" textLength="272">Farmers Market</text><text x="2291" y="737" textLength="286">H Mart Riverdale</text><text x="2300" y="967" textLength="290">The Home Depot</text></g>
          <g class="green"><text x="24" y="821" textLength="109">ochran</text><text x="29" y="860" textLength="105">ll Park</text><text x="487" y="1134" textLength="170">Wilkerson</text><text x="487" y="1173" textLength="171">Mill-Farris</text><text x="582" y="1212" textLength="77">Park</text><text x="2119" y="1386" textLength="249">Kenwood Park</text></g>
          <g class="violet"><text x="906" y="893" textLength="134">Georgia</text><text x="677" y="932" textLength="362">Renaissance Festival</text><text x="2980" y="1305">Spivey</text><text x="2146" y="1556" textLength="304">Fun Spot America</text></g>
          <g class="red"><text x="1570" y="753" textLength="128">Main St</text></g>
          <g class="water"><text x="552" y="52" transform="rotate(-5 552 52)">Chattah</text><text class="dim" x="697" y="46" transform="rotate(-14 697 46)">Cas</text></g>
        </g>

        <!-- markers -->
        <g class="markers">
          <use href="#pin" x="529" y="391" width="64" height="76" color="#607d8b"/><circle cx="561" cy="424" r="10" fill="#fff"/>
          <use href="#pin" x="2620" y="564" width="64" height="76" color="#78909c"/><text class="om" x="2652" y="608">ॐ</text>
          <use href="#pin" x="638" y="1002" width="64" height="76" color="#6d8791"/><use href="#tree" x="656" y="1018" width="20" height="28"/><path d="M652 1048h32M678 1030v16" stroke="#fff" stroke-width="4"/>
          <use href="#pin" x="143" y="787" width="64" height="76" color="#12a377"/><use href="#tree" x="163" y="803" width="24" height="32"/>
          <use href="#pin" x="668" y="1119" width="64" height="76" color="#12a377"/><use href="#tree" x="688" y="1136" width="24" height="32"/>
          <use href="#pin" x="2377" y="1334" width="64" height="76" color="#12a377"/><use href="#tree" x="2397" y="1350" width="24" height="32"/>
          <use href="#pin" x="1048" y="860" width="64" height="76" color="#a75df5"/><path d="M1062 884h8l4-6h14l4 6h8v21h-38Z" fill="#fff"/><circle cx="1080" cy="894" r="6" fill="#a75df5"/>
          <use href="#pin" x="2420" y="205" width="64" height="76" color="#1a6fe8"/><path d="M2452 220q4 0 4 10v4l16 10v5l-16-5v9l5 4v4l-9-3-9 3v-4l5-4v-9l-16 5v-5l16-10v-4q0-10 4-10Z" fill="#fff"/>
          <use href="#pin" x="2744" y="320" width="64" height="76" color="#0b8dfa"/><use href="#cart" x="2762" y="338" width="28" height="28"/>
          <use href="#pin" x="2589" y="685" width="64" height="76" color="#0b8dfa"/><use href="#cart" x="2607" y="703" width="28" height="28"/>
          <use href="#pin" x="2949" y="47" width="64" height="76" color="#0b8dfa"/><use href="#bagm" x="2967" y="61" width="28" height="32"/>
          <use href="#pin" x="2600" y="915" width="64" height="76" color="#0b8dfa"/><use href="#bagm" x="2618" y="929" width="28" height="32"/>
          <circle cx="2496" cy="1558" r="26" fill="#8b45e0"/>
          <path d="M1527 792C1521 762 1491 756 1491 724A36 36 0 0 1 1563 724C1563 756 1533 762 1527 792Z" fill="#ea4335" stroke="#c5221f" stroke-width="2"/><circle cx="1527" cy="726" r="14" fill="#b31412"/>
        </g>
        <text class="google" x="1462" y="1488" textLength="130"><tspan fill="#4285f4">G</tspan><tspan fill="#ea4335">o</tspan><tspan fill="#fbbc04">o</tspan><tspan fill="#4285f4">g</tspan><tspan fill="#34a853">l</tspan><tspan fill="#ea4335">e</tspan></text>
        <g class="legal"><text x="2056" y="1541" textLength="241">Keyboard shortcuts</text><text x="2331" y="1541" textLength="302">Map data ©2025 Google</text><text x="2668" y="1541" textLength="76">Terms</text><text x="2778" y="1541" textLength="228">Report a map error</text></g>
      </svg>
      <div class="place">
        <div><h3>Main St</h3><p>Union City, GA 30291, USA</p><a>View larger map</a></div>
        <a class="dir"><svg viewBox="0 0 18 18"><path d="M0 3l3-3 6 6-3 3Z" fill="#a6c8fb"/><path d="M7 18V9l5-5-2.500-3H18v8l-3-2.500-4 4V18Z" fill="#4d8df6"/></svg>Directions</a>
      </div>
      <svg class="thumb" viewBox="0 0 36 36"><rect width="36" height="36" fill="#2d3a30"/><path d="M0 28l8-3 6 2 8-6 5-7 9-8" fill="none" stroke="#a7aa98" stroke-width="1.200"/><g filter="url(#meander)"><path d="M3 5l6 3 4-4M18 3l3 7 8-3M2 17l9-4 6 4M20 30l8-4 6 4M12 34l3-5M28 18l6 3M5 22l9-2M23 2l8 9M10 10l5 5" fill="none" stroke="#69705f"/></g><path d="M0 10l6 5M14 22l6-4M22 24l9-9M4 32l6-2" stroke="#18241c" stroke-width="3"/></svg>
      <div class="zoom"><svg viewBox="0 0 16 16"><path d="M8 .5v15M.5 8h15"/></svg><svg viewBox="0 0 16 16"><path d="M.5 8h15"/></svg></div>
    </div>
  </section>
</main>

<footer class="footer">
  <div class="cols">
    <div class="help">
      <h4>Help Customers</h4>
      <p>Find a location nearest you to reduce shipping costs and make<br>shopping easier. <b>Show on google maps.</b></p>
      <p class="contact"><span>+1 (973) 435-3638</span><br>info@fashionwomen.com</p>
      <div class="social">
        <a><svg viewBox="0 0 12 12"><path d="M4.600 12V6.700H2.800V4.600h1.800V3.200C4.600 1.200 5.600.3 7.300.3h1.600v2H7.800c-.8 0-1 .3-1 1v1.300h2l-.3 2.100H6.800V12Z"/></svg></a>
        <a><svg viewBox="0 0 12 12"><path d="M2 .5h8q1.500 0 1.500 1.500v8q0 1.500-1.500 1.500H2Q.5 11.500.5 10V2Q.5.500 2 .5Z" fill="none" stroke="#333"/><path d="M1 1h8v3.500H1Z"/><circle cx="6" cy="6.300" r="3" fill="#fff" stroke="#333"/><path d="M9.300 1.500h1.500V3H9.300Z"/></svg></a>
        <a><svg viewBox="0 0 12 12"><path d="M7 .5v7.700A2.300 2.300 0 1 1 4.800 6M7 .8c.2 2 1.500 3 3.300 3" fill="none" stroke="#333" stroke-width="1.700"/></svg></a>
        <a><svg viewBox="0 0 12 12"><rect x=".5" y="2" width="11" height="8.500" rx="2"/><path d="M4.500 4l4 2.200-4 2.300Z" fill="#fff"/></svg></a>
        <a><svg viewBox="0 0 12 12"><path d="M6 .3c2 0 3 1.300 3 3v1.400l1 0 .2.700-1 .8c.4 1.300 1.200 2 2.400 2.600l-.3.800-1.600.4-.5.900H7.800L6 11.900l-1.800-1H2.800l-.5-.9-1.600-.4-.3-.8C1.600 8.200 2.400 7.500 2.800 6.200l-1-.8.2-.7h1V3.300c0-1.700 1-3 3-3Z"/></svg></a>
      </div>
    </div>
    <div class="links company"><h4>Our Company</h4><a>Terms Of Use</a><a>Privacy Policy</a><a>About Us</a><a>Contact Us</a><a>FAQ</a><a>Store Location</a></div>
    <div class="links"><h4>Shop Categories</h4><a>Hot Deals</a><a>Best Seller</a><a>Sale &amp; Special Offers</a><a>Activewear</a><a>Popular Trends</a><a>Croptop</a></div>
    <div class="news">
      <h4>Sign Up to Newsletter</h4>
      <p>Sign up for 10% off your first purchase and free shipping. Updates<br>information on Sales and Offers.</p>
      <div class="signup"><span>Enter your email...</span><button>Subcribe</button></div>
      <p class="terms">***By entering the e-mail you accept the <b>terms and conditions</b><br>and the <b>privacy policy.</b></p>
    </div>
  </div>
  <div class="bottom">
    <a class="lang">English<svg class="chev"><use href="#down"/></svg></a>
    <a class="money"><svg class="flag"><use href="#flag"/></svg>United States (USD $)<svg class="chev"><use href="#down"/></svg></a>
    <p>© 2025 Glozin store. All rights reserved.</p>
    <div class="cards">
      <span class="amex">AMEX</span>
      <span class="klarna">Klarna.</span>
      <span class="cirrus">Cirrus</span>
      <span class="master">MasterCard</span>
      <span class="western">WESTERN<br>UNION</span>
      <span class="visa">VISA</span>
      <span class="paypal">PayPal</span>
    </div>
  </div>
</footer>
<a class="rtl">RTL</a>
</body>
</html>
```
FILE: styles.css
```css
* { box-sizing: border-box; }
body { margin: 0; background: #fff; font-family: Inter, "Liberation Sans", sans-serif; font-size: 14px; color: #444; letter-spacing: -.4px; width: 1713px; height: 1381px; overflow: hidden; position: relative; }
h1, h2, h3, h4, p { margin: 0; }
a { white-space: nowrap; }
b { font-weight: 600; color: #111; }
.sprite { position: absolute; }
.chev { width: 10px; height: 6px; flex: none; }

.topbar { height: 39px; background: #111; color: #fff; display: flex; justify-content: space-between; align-items: center; padding: 0 28px 0 28px; font-size: 12px; letter-spacing: -.12px; }
.topbar b { color: #fff; }
.announce { display: flex; align-items: center; }
.announce p { margin-left: 21px; letter-spacing: -.43px; }
.arrow { width: 6px; height: 10px; margin-right: 18px; fill: none; stroke: #aaa; stroke-width: 1; }
.announce .arrow + .arrow { margin-right: 0; }
.toplinks { display: flex; gap: 23px; align-items: center; }
.picker { display: flex; align-items: center; }
.currency { letter-spacing: -.2px; }
.picker .chev { margin-left: 9px; width: 9px; }
.flag { width: 20px; height: 20px; margin-right: 9px; flex: none; }

.header { height: 65px; border-bottom: 1px solid #e8e8e8; display: grid; grid-template-columns: 1fr auto 1fr; align-items: center; padding: 0 28px 0 27px; }
.logo { font-family: Lato, sans-serif; font-weight: 700; font-size: 34px; line-height: 40px; letter-spacing: -2.100px; color: #111; padding-bottom: 6px; }
.nav { display: flex; gap: 31px; font-weight: 600; color: #111; letter-spacing: -.2px; padding-bottom: 2px; }
.nav a { display: flex; align-items: center; }
.nav .chev { margin-left: 7px; width: 9px; }
.sale { position: relative; }
.hot { position: absolute; left: 17px; top: -14px; width: 28px; height: 14px; border-radius: 2px; background: #d0433b; color: #fff; font-size: 8px; line-height: 14px; text-align: center; letter-spacing: 0; }
.hot::after { content: ""; position: absolute; left: 5px; top: 14px; border: 4px solid transparent; border-top-color: #d0433b; border-bottom: 0; }
.tools { display: flex; align-items: center; justify-content: flex-end; padding-right: 9px; }
.search { width: 240px; height: 38px; border: 1px solid #e6e6e6; border-radius: 19px; display: flex; align-items: center; padding-left: 16px; color: #777; font-size: 13px; margin-right: 14px; letter-spacing: -.42px; }
.search svg { width: 16px; height: 16px; margin-right: 10px; fill: none; stroke: #666; stroke-width: 1.300; }
.tool { position: relative; height: 18px; margin-left: 24px; }
.search + .tool { margin-left: 0; }
.tool svg { width: 18px; height: 18px; display: block; fill: none; stroke: #111; stroke-width: 1.500; }
.tool i { position: absolute; left: 11px; top: -4px; width: 16px; height: 16px; border-radius: 50%; background: #d0433b; color: #fff; font: 600 9px/16px Inter, sans-serif; text-align: center; letter-spacing: 0; }

.intro { text-align: center; padding-top: 76px; height: 229px; }
.crumbs { font-size: 13px; line-height: 16px; color: #111; display: flex; justify-content: center; align-items: center; letter-spacing: -.18px; }
.crumbs span { color: #888; }
.crumbs em { width: 3px; height: 3px; border-radius: 50%; background: #555; margin: 0 7px; }
h1 { font-size: 28px; line-height: 36px; margin-top: 10px; color: #111; font-weight: 600; letter-spacing: -1.400px; }
.intro p { margin-top: 10px; line-height: 20px; letter-spacing: -.37px; }

.locator { width: 1305px; height: 509px; margin: 0 auto; display: grid; grid-template-columns: 289px 16px 1fr; border-radius: 10px; overflow: hidden; }
.stores { overflow: hidden; border: 1px solid #e6e6e6; border-right: 0; border-radius: 10px 0 0 10px; }
.stores article { height: 124px; padding: 19px 23px 0; border-bottom: 1px solid #e6e6e6; }
.stores .active { background: #f4f4f4; }
.stores h2 { font-size: 15px; line-height: 20px; font-weight: 600; color: #111; margin-bottom: 5px; letter-spacing: -.25px; }
.stores .active h2 { color: #333; }
.stores p { line-height: 20.400px; letter-spacing: -.24px; white-space: nowrap; }
.stores .tight { letter-spacing: -.42px; }
.stores .tel { letter-spacing: -.6px; }
.scroll { background: #f1f1f1; display: flex; flex-direction: column; align-items: center; justify-content: space-between; padding: 5px 0; }
.scroll svg { width: 9px; height: 6px; fill: none; stroke: #444; stroke-width: 2; }
.scroll span { width: 16px; height: 312px; background: #c9c9c9; margin: 6px 0 auto; }
.map { position: relative; overflow: hidden; }
.canvas { display: block; width: 1000px; height: 509px; font-family: Roboto, sans-serif; letter-spacing: 0; }
.canvas text { paint-order: stroke; stroke: #fff; stroke-width: 5px; stroke-linejoin: round; stroke-opacity: .8; }
.canvas .route rect { fill: #fff; stroke: #5f666d; stroke-width: 3; }
.canvas .route text { stroke: none; font-size: 25px; fill: #40464c; text-anchor: middle; font-weight: 500; }
.canvas .inter text { stroke: none; font-size: 26px; fill: #fff; text-anchor: middle; font-weight: 700; }
.town { font-size: 38px; font-weight: 500; fill: #202124; }
.area { font-size: 23px; font-weight: 500; fill: #44484d; }
.poi { font-size: 39px; }
.grey { fill: #5e7582; }
.blue { fill: #2a70e8; }
.green { fill: #178a5c; }
.violet { fill: #9442f0; }
.red { fill: #d5221c; }
.water { fill: #3893aa; font-size: 30px; }
.water .dim { fill: #68707a; }
.canvas .om { stroke: none; fill: #fff; font-size: 32px; text-anchor: middle; }
.canvas .google { font-size: 43px; font-weight: 500; }
.canvas .legal text { font-size: 27px; fill: #111; stroke-width: 3px; stroke-opacity: .5; }
.place { position: absolute; left: 10px; top: 9px; width: 279px; height: 85px; background: #fff; box-shadow: 0 1px 4px rgba(0,0,0,.3); border-radius: 2px; padding: 9px 18px 0 11px; display: flex; justify-content: space-between; font: 11.500px/16px Roboto, sans-serif; letter-spacing: -.13px; color: #5b5b5b; }
.place h3 { font-size: 13.500px; font-weight: 500; line-height: 16px; color: #000; letter-spacing: -.2px; }
.place p { margin: 4px 0 16px; }
.place a { color: #1a73e8; }
.place .dir { display: flex; flex-direction: column; align-items: center; padding-top: 4px; gap: 3px; }
.dir svg { width: 17px; height: 17px; }
.thumb { position: absolute; left: 10px; bottom: 10px; width: 39px; height: 39px; border: 2px solid #fff; border-radius: 2px; box-shadow: 0 1px 4px rgba(0,0,0,.4); }
.zoom { position: absolute; right: 9px; bottom: 21px; width: 37px; height: 76px; background: linear-gradient(#e6e6e6, #e6e6e6) center/29px 1px no-repeat #fff; border-radius: 2px; box-shadow: 0 1px 4px rgba(0,0,0,.3); display: grid; grid-template-rows: 1fr 1fr; justify-items: center; align-items: center; }
.zoom svg { width: 16px; height: 16px; stroke: #666; stroke-width: 2; }

.footer { margin-top: 89px; border-top: 1px solid #e6e6e6; padding: 73px 204px 0; }
.cols { display: grid; grid-template-columns: 452px 218.500px 218.500px 416px; height: 292px; }
h4 { font-size: 15px; line-height: 22px; font-weight: 600; color: #111; margin-bottom: 21px; letter-spacing: -.28px; }
.cols p { line-height: 24px; white-space: nowrap; letter-spacing: -.36px; }
.cols .contact { color: #111; margin-top: 19px; letter-spacing: -.65px; }
.contact span { letter-spacing: -.8px; }
.social { display: flex; gap: 9.200px; margin-top: 22px; }
.social a { width: 37px; height: 37px; border: 1px solid #444; border-radius: 50%; display: grid; place-items: center; }
.social svg { width: 12px; height: 12px; fill: #333; }
.links { display: flex; flex-direction: column; letter-spacing: -.33px; }
.links a { line-height: 24px; margin-bottom: 8.200px; }
.signup { display: flex; gap: 8px; margin-top: 22px; }
.signup span { flex: 1; height: 47px; border: 1px solid #e6e6e6; border-radius: 24px; padding: 0 18px; line-height: 45px; color: #777; }
.signup button { width: 149px; height: 47px; border: 0; border-radius: 24px; background: #111; color: #fff; font: 600 14px Inter, sans-serif; letter-spacing: -.5px; }
.news p { letter-spacing: -.41px; }
.cols .terms { margin-top: 14px; line-height: 23.500px; letter-spacing: -.35px; }
.bottom { border-top: 1px solid #e2e2e2; height: 83px; display: flex; align-items: center; }
.bottom a { display: flex; align-items: center; letter-spacing: -.22px; }
.bottom .chev { margin-left: 9px; width: 9px; }
.lang { margin-right: 29px; }
.money { margin-right: 29px; }
.cards { display: flex; gap: 4.700px; margin: 3px 0 0 auto; }
.cards span { width: 42.500px; height: 21px; border-radius: 2px; color: #fff; display: flex; align-items: center; justify-content: center; font: 800 9.500px/9px Inter, sans-serif; letter-spacing: -.3px; overflow: hidden; }
.cards .amex { background: #27a3d2; font-style: italic; font-size: 10px; }
.cards .klarna { background: #ffafc8; color: #111; font-weight: 700; }
.cards .cirrus { background: radial-gradient(circle at 16px 50%, #3b66b5 7px, transparent 7.500px), radial-gradient(circle at 26px 50%, #1a96dc 7px, transparent 7.500px), #0a23b0; font-size: 8px; }
.cards .master { background: radial-gradient(circle at 16px 50%, #e4002b 7px, transparent 7.500px), radial-gradient(circle at 26px 50%, #f59b11 7px, transparent 7.500px), #222; font-size: 5px; font-style: italic; letter-spacing: -.2px; }
.cards .western { background: #ffdf1a; color: #111; font-size: 5px; line-height: 4.500px; text-align: right; letter-spacing: 0; font-weight: 900; }
.cards .visa { background: #22226f; font-size: 12px; font-style: italic; }
.cards .paypal { background: #253b80; font-size: 9px; font-style: italic; font-weight: 700; letter-spacing: 0; }
.rtl { position: absolute; right: 14px; top: 442px; width: 46px; height: 46px; border-radius: 50%; background: #111; color: #fff; font-weight: 600; font-size: 11px; line-height: 46px; text-align: center; letter-spacing: -.2px; }
```
